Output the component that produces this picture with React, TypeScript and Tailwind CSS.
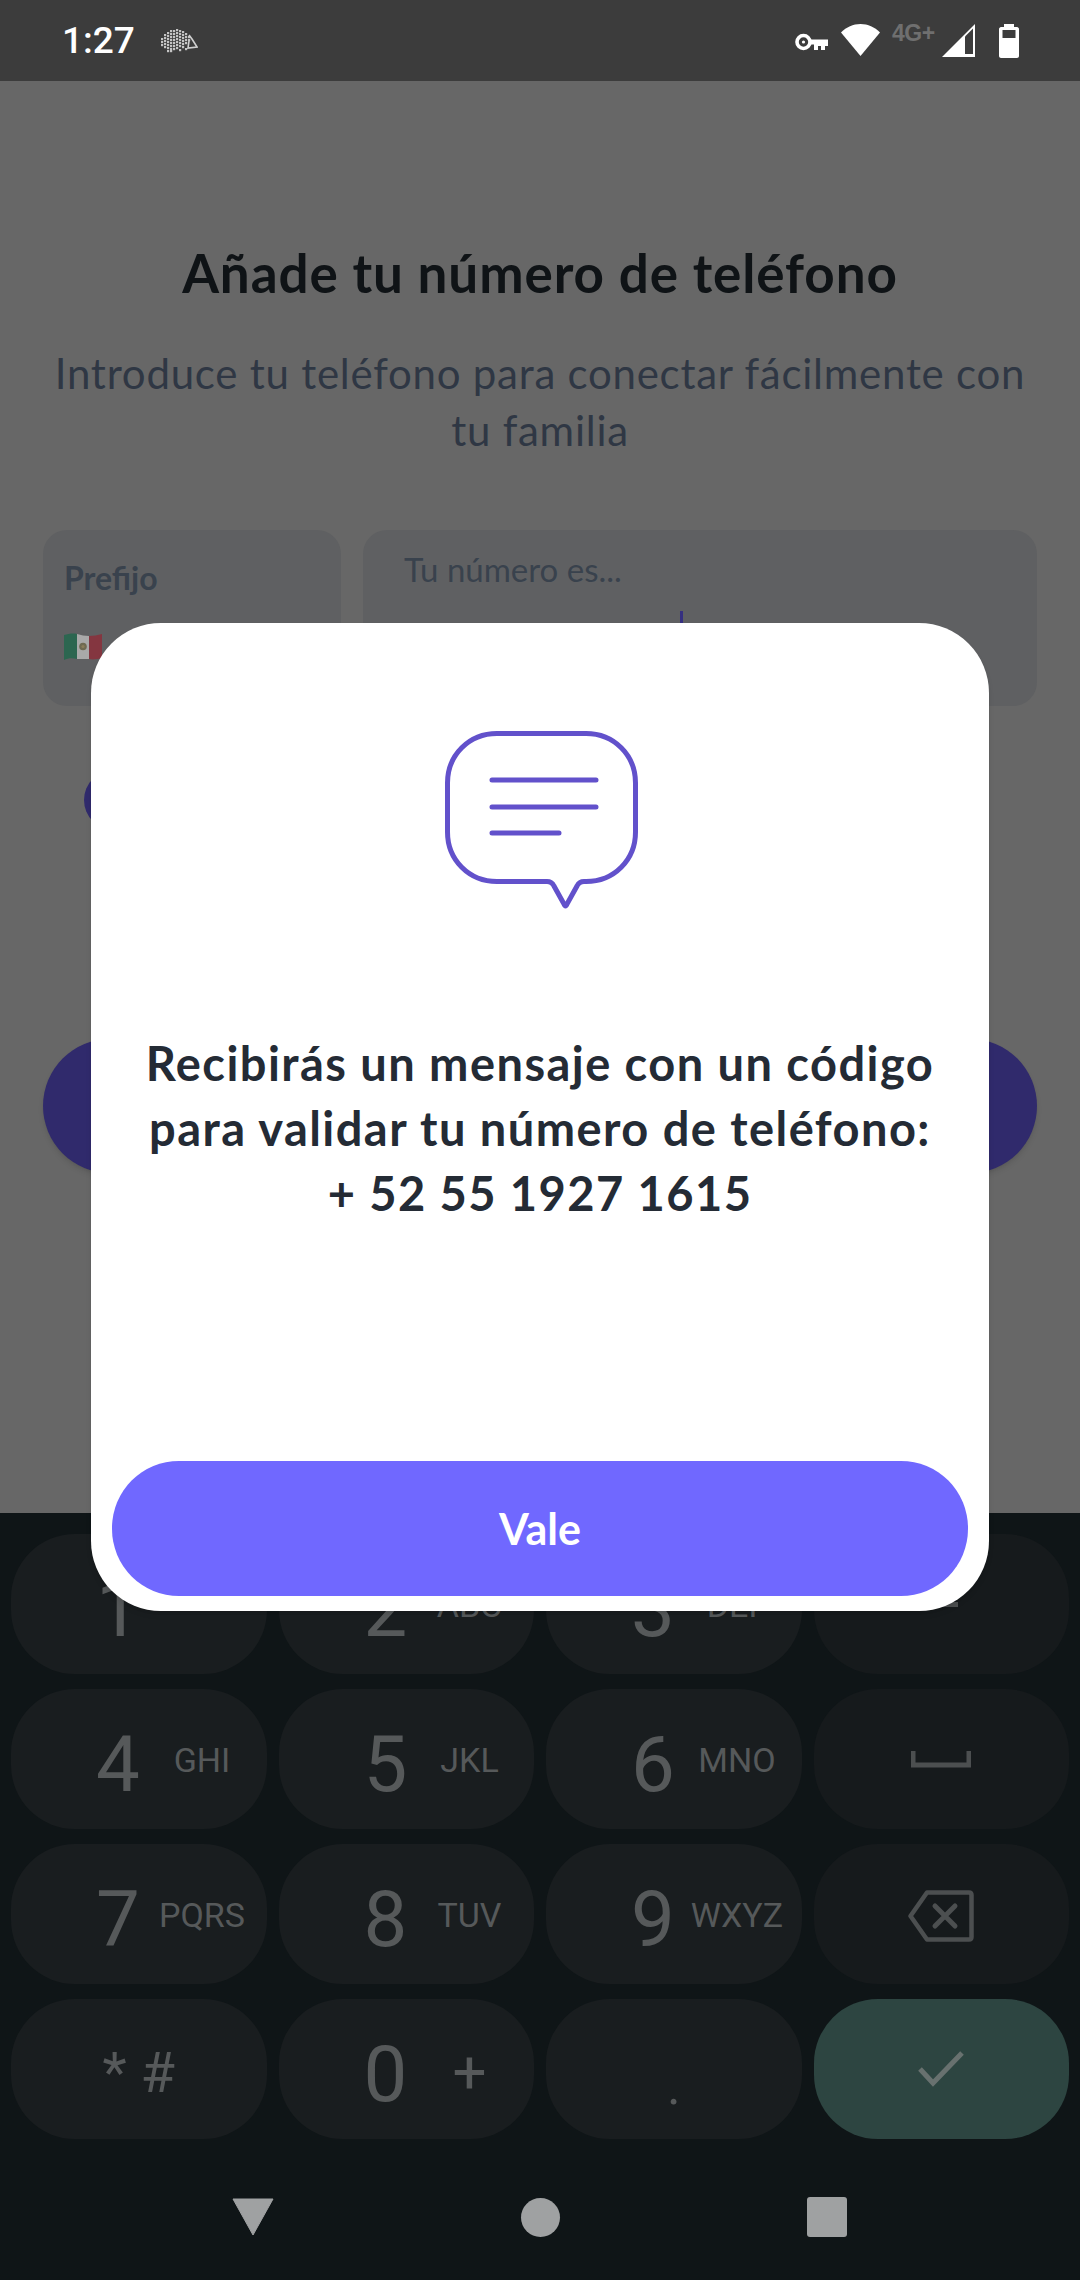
import type { ReactNode } from 'react';

const uiFont = "font-['Lato','Noto_Sans',sans-serif]";
const keyFont = "font-['Roboto',sans-serif]";

// puntos del erizo en la barra de estado
const hedgehogDots: [number, number][] = [
  [1, 9], [1, 12], [1, 15], [4, 5], [4, 8], [4, 11], [4, 14], [4, 17], [7, 3], [7, 6], [7, 9], [7, 12], [7, 15], [7, 18], [7, 21],
  [10, 1], [10, 4], [10, 7], [10, 10], [10, 13], [10, 16], [10, 19], [10, 21], [13, 1], [13, 4], [13, 7], [13, 10], [13, 13], [13, 16], [13, 19],
  [16, 0], [16, 3], [16, 6], [16, 9], [16, 12], [16, 15], [16, 18], [19, 1], [19, 4], [19, 7], [19, 10], [19, 13], [19, 16], [19, 20],
  [22, 2], [22, 5], [22, 8], [22, 11], [22, 14], [22, 17], [25, 4], [25, 7], [25, 10], [25, 13], [25, 19], [28, 7], [28, 10],
];

function Hedgehog() {
  return (
    <svg width="38" height="24" viewBox="0 0 38 24" className="ml-[25px] mt-[1px]">
      {hedgehogDots.map(([x, y]) => (
        <rect key={`${x}-${y}`} x={x} y={y} width="2.2" height="2.2" fill="#c4c4c4" />
      ))}
      <path d="M29 6 L32 10 L37 18 L28 19 L29 12" fill="none" stroke="#d0d0d0" strokeWidth="1.6" />
    </svg>
  );
}

function StatusIcons() {
  return (
    <div className="flex items-center">
      <svg width="33" height="18" viewBox="0 0 33 18" className="mt-[3px]">
        <circle cx="8.5" cy="9" r="6.5" fill="none" stroke="#fff" strokeWidth="3.6" />
        <circle cx="8.5" cy="9" r="1.6" fill="#fff" />
        <path d="M14 6.5H33V13H30V17H26V13H23V17H19V11.5H14Z" fill="#fff" />
      </svg>
      <svg width="39" height="32" viewBox="0 0 39 32" className="ml-[13px] -mt-[2px]">
        <path d="M19.5 32 L0 8.5 C5.5 3 12 0 19.5 0 C27 0 33.5 3 39 8.5 Z" fill="#fff" />
      </svg>
      <div className="ml-[12px] -mt-[15px] w-[44px] font-['Liberation_Sans',sans-serif] text-[23px] leading-none font-bold tracking-[-0.5px] whitespace-nowrap text-[#6f6f6f]">
        4G+
      </div>
      <svg width="33" height="33" viewBox="0 0 33 33" className="ml-[6px]">
        <path d="M33 0V33H0Z" fill="#fff" />
        <path d="M23 12.5L31 4.5V30H23Z" fill="#3c3c3c" />
      </svg>
      <svg width="20" height="34" viewBox="0 0 20 34" className="ml-[24px]">
        <path d="M5 0H15V3H18C19 3 20 4 20 5V32C20 33 19 34 18 34H2C1 34 0 33 0 32V5C0 4 1 3 2 3H5Z" fill="#fff" />
        <rect x="3.5" y="6" width="13" height="8" fill="#3c3c3c" />
      </svg>
    </div>
  );
}

function MexicoFlag() {
  return (
    <svg width="38" height="27" viewBox="0 0 38 27">
      <path d="M0 2C4 1 9 0 13 1V26C9 25 4 25 0 27Z" fill="#2c6650" />
      <path d="M13 1C17 2 21 3 25 3V26C21 26 17 26 13 26Z" fill="#a9a9a9" />
      <path d="M25 3C29 3 34 2 38 1V25C34 26 29 27 25 26Z" fill="#843640" />
      <circle cx="19" cy="13.5" r="3.8" fill="#6f6a52" />
      <circle cx="19" cy="13.5" r="1.6" fill="#8a7d5a" />
    </svg>
  );
}

function Key({
  digit,
  letters,
  letterClass = 'text-[34px] pt-[2px]',
}: {
  digit: string;
  letters?: string;
  letterClass?: string;
}) {
  return (
    <div className={`flex h-[140px] items-center rounded-[64px] bg-[#191d1f] pl-[67px] ${keyFont} text-[#56595a]`}>
      <span className="w-[80px] pt-[12px] text-center text-[78px] leading-none font-normal">{digit}</span>
      {letters && <span className={`flex w-[88px] justify-center leading-none font-normal whitespace-nowrap ${letterClass}`}>{letters}</span>}
    </div>
  );
}

function IconKey({ children, className = 'bg-[#161a1c]' }: { children: ReactNode; className?: string }) {
  return <div className={`flex h-[140px] items-center justify-center rounded-[64px] ${className}`}>{children}</div>;
}

function Keypad() {
  return (
    <div className="grid grid-cols-4 gap-x-[12px] gap-y-[15px] px-[11px] pt-[21px]">
      <Key digit="1" />
      <Key digit="2" letters="ABC" />
      <Key digit="3" letters="DEF" />
      <IconKey>
        <div className="h-[5px] w-[34px] bg-[#4c4f50]" />
      </IconKey>

      <Key digit="4" letters="GHI" />
      <Key digit="5" letters="JKL" />
      <Key digit="6" letters="MNO" />
      <IconKey>
        <svg width="60" height="17" viewBox="0 0 60 17">
          <path d="M2 0V14H58V0" fill="none" stroke="#4c4f50" strokeWidth="5" />
        </svg>
      </IconKey>

      <Key digit="7" letters="PQRS" />
      <Key digit="8" letters="TUV" />
      <Key digit="9" letters="WXYZ" />
      <IconKey>
        <svg width="66" height="52" viewBox="0 0 66 52" className="mt-[3px]">
          <path d="M19 2.5H61C62.5 2.5 63.5 3.5 63.5 5V47C63.5 48.5 62.5 49.5 61 49.5H19L2.5 26Z" fill="none" stroke="#4c4f50" strokeWidth="4.5" strokeLinejoin="round" />
          <path d="M27 16L47 36M47 16L27 36" stroke="#4c4f50" strokeWidth="5" strokeLinecap="round" />
        </svg>
      </IconKey>

      <div className={`flex h-[140px] items-center justify-center rounded-[64px] bg-[#191d1f] pt-[8px] ${keyFont} text-[56px] leading-none text-[#56595a]`}>
        * #
      </div>
      <Key digit="0" letters="+" letterClass="text-[60px] pt-[8px]" />
      <div className={`flex h-[140px] items-center justify-center rounded-[64px] bg-[#191d1f] pt-[36px] ${keyFont} text-[52px] leading-none text-[#56595a]`}>
        .
      </div>
      <IconKey className="bg-[#2d4541]">
        <svg width="48" height="38" viewBox="0 0 48 38">
          <path d="M3 19L16 33L45 3" fill="none" stroke="#68716f" strokeWidth="5" />
        </svg>
      </IconKey>
    </div>
  );
}

function NavBar() {
  return (
    <div className="mt-[58px] flex items-center justify-center gap-[247px] pr-[2px]">
      <svg width="42" height="38" viewBox="0 0 42 38">
        <path d="M1 1H41L21 37Z" fill="#9fa1a2" stroke="#9fa1a2" strokeLinejoin="round" />
      </svg>
      <div className="h-[39px] w-[39px] rounded-full bg-[#9fa1a2]" />
      <div className="h-[40px] w-[40px] rounded-[3px] bg-[#9fa1a2]" />
    </div>
  );
}

function MessageIcon() {
  return (
    <svg width="200" height="182" viewBox="0 0 200 182">
      <path
        d="M57 4.5H146C174 4.5 195.5 26 195.5 54V103C195.5 131 174 152.5 146 152.5H144C141 152.5 138.5 154 137 157L127 175C126 177.5 125 177.5 124 175L114 157C112.5 154 110 152.5 107 152.5H57C29 152.5 7.5 131 7.5 103V54C7.5 26 29 4.5 57 4.5Z"
        fill="none"
        stroke="#6251cb"
        strokeWidth="5"
      />
      <path d="M52 51H156M52 78H156M52 104H119" fill="none" stroke="#6251cb" strokeWidth="5" strokeLinecap="round" />
    </svg>
  );
}

function ConfirmDialog() {
  return (
    <div className={`absolute top-[623px] left-[91px] flex h-[988px] w-[898px] flex-col items-center rounded-[70px] bg-white shadow-md ${uiFont}`}>
      <div className="mt-[106px]">
        <MessageIcon />
      </div>
      <p className="mt-[120px] text-center text-[47px] leading-[65px] font-bold tracking-[1.45px] whitespace-nowrap text-[#242b35]">
        Recibirás un mensaje con un código
        <br />
        para validar tu número de teléfono:
        <br />+ 52 55 1927 1615
      </p>
      <button className="mt-auto mb-[15px] h-[135px] w-[856px] rounded-[67px] bg-[#7068ff] pt-[2px] text-[43px] font-bold text-white">Vale</button>
    </div>
  );
}

export default function App() {
  return (
    <div className="relative flex h-[2280px] w-[1080px] flex-col overflow-hidden bg-[#676767]">
      <header className="flex h-[81px] items-center justify-between bg-[#3c3c3c] pr-[61px] pl-[62px]">
        <div className="flex items-center">
          <span className={`${keyFont} text-[37px] leading-none font-medium text-white`}>1:27</span>
          <Hedgehog />
        </div>
        <StatusIcons />
      </header>

      <main className={`h-[1432px] shrink-0 px-[43px] pt-[164px] ${uiFont}`}>
        <h1 className="text-center text-[53px] leading-[56px] font-bold tracking-[0.9px] whitespace-nowrap text-[#0f1316]">Añade tu número de teléfono</h1>
        <p className="mt-[44px] text-center text-[42px] leading-[57px] tracking-[0.75px] whitespace-nowrap text-[#2f3744]">
          Introduce tu teléfono para conectar fácilmente con
          <br />
          tu familia
        </p>
        <div className="mt-[71px] flex gap-[22px]">
          <div className="h-[176px] w-[298px] rounded-[24px] bg-[#5f6062] px-[21px] pt-[28px]">
            <div className="text-[32px] leading-[40px] font-bold text-[#39424d]">Prefijo</div>
            <div className="mt-[35px]">
              <MexicoFlag />
            </div>
          </div>
          <div className="relative h-[176px] flex-1 rounded-[24px] bg-[#5f6062] px-[41px] pt-[19px]">
            <div className="text-[33px] leading-[40px] text-[#39424d]">Tu número es...</div>
            <div className="absolute top-[81px] left-[317px] h-[30px] w-[3px] bg-[#352f80]" />
          </div>
        </div>
        <div className="mt-[64px] ml-[41px] h-[60px] w-[60px] rounded-full bg-[#302a6c]" />
        <div className="mt-[209px] h-[134px] rounded-[67px] bg-[#302a6c] shadow-md" />
      </main>

      <section className="flex-1 bg-[#0f1517]">
        <Keypad />
        <NavBar />
      </section>

      <ConfirmDialog />
    </div>
  );
}
